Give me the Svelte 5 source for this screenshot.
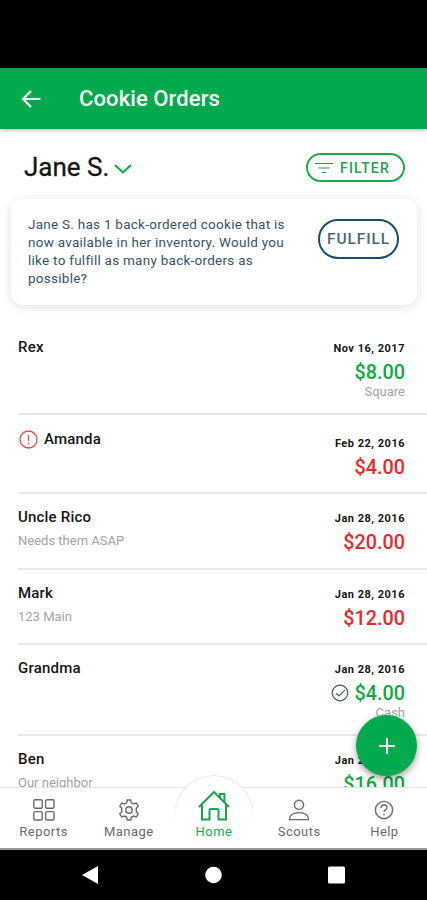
<script lang="ts">
	type Order = {
		name: string;
		note?: string;
		date: string;
		amount: string;
		method?: string;
		paid?: boolean;
		alert?: boolean;
		verified?: boolean;
		height: number;
	};

	const orders: Order[] = [
		{ name: "Rex", date: "Nov 16, 2017", amount: "$8.00", method: "Square", paid: true, height: 91 },
		{ name: "Amanda", date: "Feb 22, 2016", amount: "$4.00", alert: true, height: 79 },
		{ name: "Uncle Rico", note: "Needs them ASAP", date: "Jan 28, 2016", amount: "$20.00", height: 76 },
		{ name: "Mark", note: "123 Main", date: "Jan 28, 2016", amount: "$12.00", height: 75 },
		{ name: "Grandma", date: "Jan 28, 2016", amount: "$4.00", method: "Cash", paid: true, verified: true, height: 91 },
		{ name: "Ben", note: "Our neighbor", date: "Jan 28, 2016", amount: "$16.00", paid: true, height: 76 }
	];

	const tabs = ["Reports", "Manage", "Home", "Scouts", "Help"];
	let active = $state("Home");
</script>

<div class="screen">
	<div class="status"></div>
	<header>
		<svg class="back" width="22" height="20" viewBox="0 0 22 20">
			<path d="M20.500 10H3M11 2L3 10l8 8" />
		</svg>
		<h1>Cookie Orders</h1>
	</header>

	<main>
		<div class="scout">
			<h2>Jane S.</h2>
			<svg class="chevron" width="18" height="12" viewBox="0 0 18 12">
				<path d="M1 2l8 7.5L17 2" />
			</svg>
			<button class="filter">
				<svg width="19" height="12" viewBox="0 0 19 12">
					<path d="M0 1.500h18M3.500 6h11M7 10.500h4" />
				</svg>
				<span>FILTER</span>
			</button>
		</div>

		<div class="card">
			<p>
				Jane S. has 1 back-ordered cookie that is<br />
				now available in her inventory. Would you<br />
				like to fulfill as many back-orders as<br />
				possible?
			</p>
			<button class="fulfill">FULFILL</button>
		</div>

		<div class="orders">
			{#each orders as order}
				<div class="order" class:alert={order.alert} style="height: {order.height}px">
					<div class="who">
						<div class="name">
							{#if order.alert}
								<svg width="20" height="20" viewBox="0 0 20 20">
									<circle cx="10.500" cy="10.500" r="8.500" />
									<path d="M10.500 6v5.800M10.500 13.500v1.500" />
								</svg>
							{/if}
							<span>{order.name}</span>
						</div>
						{#if order.note}<div class="note">{order.note}</div>{/if}
					</div>
					<div class="payment">
						<div class="date">{order.date}</div>
						<div class="amount" class:paid={order.paid}>
							{#if order.verified}
								<svg width="18" height="18" viewBox="0 0 18 18">
									<circle cx="9" cy="9" r="7.800" />
									<path d="M5 9.200l3 2.800 6-6.200" />
								</svg>
							{/if}
							<span>{order.amount}</span>
						</div>
						{#if order.method}<div class="method">{order.method}</div>{/if}
					</div>
				</div>
			{/each}
		</div>

		<button class="add" aria-label="Add order">
			<svg width="18" height="18" viewBox="0 0 18 18"><path d="M9 1v16M1 9h16" /></svg>
		</button>
	</main>

	<nav>
		<div class="bump"></div>
		{#each tabs as tab}
			<button class="tab" class:active={tab === active} onclick={() => (active = tab)}>
				<span class="icon">
					{#if tab === "Reports"}
						<svg width="22" height="22" viewBox="0 0 22 22">
							<rect x="0.800" y="0.800" width="8.400" height="8.400" rx="1.300" />
							<rect x="12.600" y="0.800" width="8.400" height="8.400" rx="1.300" />
							<rect x="0.800" y="12.600" width="8.400" height="8.400" rx="1.300" />
							<rect x="12.600" y="12.600" width="8.400" height="8.400" rx="1.300" />
						</svg>
					{:else if tab === "Manage"}
						<svg width="22" height="22" viewBox="0 0 22 22">
							<path
								d="M9.300 1h3.400l.6 2.800q1.200.4 2.200 1.100l2.800-.9 1.900 3.200-2 2q.3 1.800 0 3.600l2 2-1.900 3.200-2.800-.9q-1 .7-2.200 1.100L12.700 21H9.300l-.6-2.800q-1.200-.4-2.200-1.100l-2.800.9-1.900-3.200 2-2q-.3-1.800 0-3.600l-2-2L3.700 4l2.800.9q1-.7 2.200-1.100z"
							/>
							<circle cx="11" cy="11" r="3.200" />
						</svg>
					{:else if tab === "Home"}
						<svg width="34" height="32" viewBox="0 0 34 32">
							<path d="M2 17L17 2l15 15M23 7.500V4h4.500v8" />
							<path d="M5 15v14.500h7.500v-9q0-1.500 1.500-1.500h6q1.500 0 1.500 1.500v9H29V15" />
						</svg>
					{:else if tab === "Scouts"}
						<svg width="22" height="22" viewBox="0 0 22 22">
							<circle cx="11" cy="5.800" r="4.600" />
							<path d="M1.500 20.600q0-7 9.500-7t9.500 7z" />
						</svg>
					{:else}
						<svg width="20" height="20" viewBox="0 0 20 20">
							<circle cx="10" cy="10" r="8.600" />
							<path d="M7.200 8q0-3 2.900-3t2.900 2.500q0 1.500-1.600 2.400T10 12M10 13.700v1.600" />
						</svg>
					{/if}
				</span>
				<span class="label">{tab}</span>
			</button>
		{/each}
	</nav>

	<div class="system">
		<svg width="17" height="20" viewBox="0 0 17 20"><path d="M17 1v18L1 10z" /></svg>
		<svg width="17" height="20" viewBox="0 0 17 20"><circle cx="8.500" cy="10" r="8.300" /></svg>
		<svg width="17" height="20" viewBox="0 0 17 20"><rect y="1.500" width="17" height="17" rx="1.500" /></svg>
	</div>
</div>

<style>
	:global(body) {
		margin: 0;
		background: #000;
	}
	.screen {
		display: flex;
		flex-direction: column;
		width: 427px;
		height: 900px;
		overflow: hidden;
		background: #fff;
		font-family: Roboto, sans-serif;
		color: #151515;
	}
	h1,
	h2,
	p {
		margin: 0;
		font-weight: 500;
	}
	button {
		border: none;
		padding: 0;
		background: none;
		font-family: inherit;
		cursor: pointer;
	}
	svg {
		flex-shrink: 0;
		fill: none;
		stroke: currentColor;
	}
	.status {
		flex: none;
		height: 68px;
		background: #000;
	}
	header {
		display: flex;
		align-items: center;
		flex: none;
		box-sizing: border-box;
		height: 61px;
		padding-left: 20px;
		background: #02a94d;
		color: #fff;
		box-shadow: 0 1px 4px rgba(0, 0, 0, 0.3);
		z-index: 1;
	}
	.back {
		stroke-width: 2.2;
	}
	h1 {
		margin-left: 37px;
		font-size: 22px;
		line-height: 26px;
		letter-spacing: 0.1px;
	}
	main {
		position: relative;
		display: flex;
		flex-direction: column;
		flex: none;
		height: 658px;
	}
	.scout {
		display: flex;
		align-items: center;
		flex: none;
		height: 70px;
		padding: 0 22px 0 24px;
	}
	h2 {
		margin-top: 5px;
		font-size: 26px;
		font-weight: 400;
		line-height: 32px;
		-webkit-text-stroke: 0.3px;
	}
	.chevron {
		margin: 10px 0 0 5px;
		color: #02a94d;
		stroke-width: 2;
	}
	.filter {
		display: flex;
		align-items: center;
		gap: 6px;
		box-sizing: border-box;
		width: 99px;
		height: 29px;
		margin: 7px 0 0 auto;
		padding-left: 7px;
		border: 2px solid #1fa84c;
		border-radius: 15px;
		color: #1fa04c;
		font-size: 14px;
		font-weight: 500;
		letter-spacing: 1.2px;
	}
	.filter svg {
		stroke-width: 1.2;
	}
	.card {
		display: flex;
		justify-content: space-between;
		align-items: flex-start;
		flex: none;
		box-sizing: border-box;
		height: 106px;
		margin: 0 10px 0 11px;
		padding: 16px 18px 0 17px;
		border-radius: 12px;
		background: #fff;
		box-shadow: 0 2px 12px rgba(0, 0, 0, 0.12);
	}
	.card p {
		font-size: 13.5px;
		font-weight: 400;
		line-height: 18px;
		letter-spacing: 0.26px;
		color: #36536a;
	}
	.fulfill {
		box-sizing: border-box;
		width: 81px;
		height: 40px;
		margin-top: 4px;
		border: 2px solid #1c4c68;
		border-radius: 20px;
		color: #4a6478;
		font-size: 15.5px;
		font-weight: 500;
		letter-spacing: 0.9px;
	}
	.orders {
		flex: 1;
		margin-top: 19px;
		padding-left: 18px;
		overflow: hidden;
	}
	.order {
		display: flex;
		justify-content: space-between;
		box-sizing: border-box;
		padding: 14px 22px 0 0;
		border-bottom: 2px solid #e8e8e8;
	}
	.name {
		display: flex;
		align-items: center;
		gap: 5px;
		height: 18px;
		font-size: 15px;
		font-weight: 500;
		letter-spacing: 0.2px;
	}
	.alert .name {
		padding-top: 1px;
	}
	.name svg {
		margin-right: 1px;
		color: #f04444;
		stroke-width: 1.3;
	}
	.note,
	.method {
		color: #a2a2a6;
		font-size: 13px;
		line-height: 16px;
	}
	.note {
		margin-top: 7px;
	}
	.payment {
		display: flex;
		flex-direction: column;
		align-items: flex-end;
		padding-top: 4px;
	}
	.alert .payment {
		padding-top: 8px;
	}
	.date {
		font-size: 11px;
		font-weight: 700;
		line-height: 14px;
		letter-spacing: 0.5px;
	}
	.amount {
		display: flex;
		align-items: center;
		gap: 6px;
		height: 24px;
		margin-top: 4px;
		color: #e8282c;
		font-size: 19.8px;
		font-weight: 500;
	}
	.paid {
		color: #10a843;
	}
	.amount svg {
		color: #45606f;
		stroke-width: 1.2;
	}
	.method {
		line-height: 15px;
	}
	.add {
		position: absolute;
		right: 10px;
		bottom: 11px;
		display: flex;
		align-items: center;
		justify-content: center;
		width: 61px;
		height: 61px;
		border-radius: 50%;
		background: #02a94d;
		color: #fff;
		box-shadow: 0 3px 7px rgba(0, 0, 0, 0.38);
	}
	.add svg {
		stroke-width: 2;
	}
	nav {
		position: relative;
		display: flex;
		flex: none;
		box-sizing: border-box;
		height: 63px;
		padding-left: 1px;
		border-top: 1px solid #e6e6e6;
		border-bottom: 2px solid #999;
		background: #fff;
	}
	.bump {
		position: absolute;
		left: 174px;
		top: -13px;
		box-sizing: border-box;
		width: 80px;
		height: 50px;
		border: 1px solid #e6e6e6;
		border-bottom: none;
		border-radius: 40px 40px 0 0;
		background: #fff;
		-webkit-mask-image: linear-gradient(#000 50%, transparent);
		mask-image: linear-gradient(#000 50%, transparent);
	}
	.tab {
		position: relative;
		display: flex;
		flex: 1;
		flex-direction: column;
		align-items: center;
		color: #6a6a6a;
	}
	.icon {
		display: flex;
		align-items: center;
		justify-content: center;
		height: 22px;
		margin-top: 11px;
	}
	.icon svg {
		stroke-width: 1.4;
	}
	.label {
		margin-top: 3px;
		font-size: 13px;
		line-height: 16px;
		letter-spacing: 0.45px;
	}
	.active {
		color: #18a84c;
	}
	.active .icon {
		padding-bottom: 4px;
		margin-top: 7px;
	}
	.active .icon svg {
		stroke-width: 2;
	}
	.system {
		display: flex;
		align-items: center;
		justify-content: space-between;
		flex: none;
		box-sizing: border-box;
		height: 50px;
		padding: 0 82px 0 81px;
		background: #000;
		color: #fff;
	}
	.system svg {
		fill: #fff;
		stroke: none;
	}
</style>
